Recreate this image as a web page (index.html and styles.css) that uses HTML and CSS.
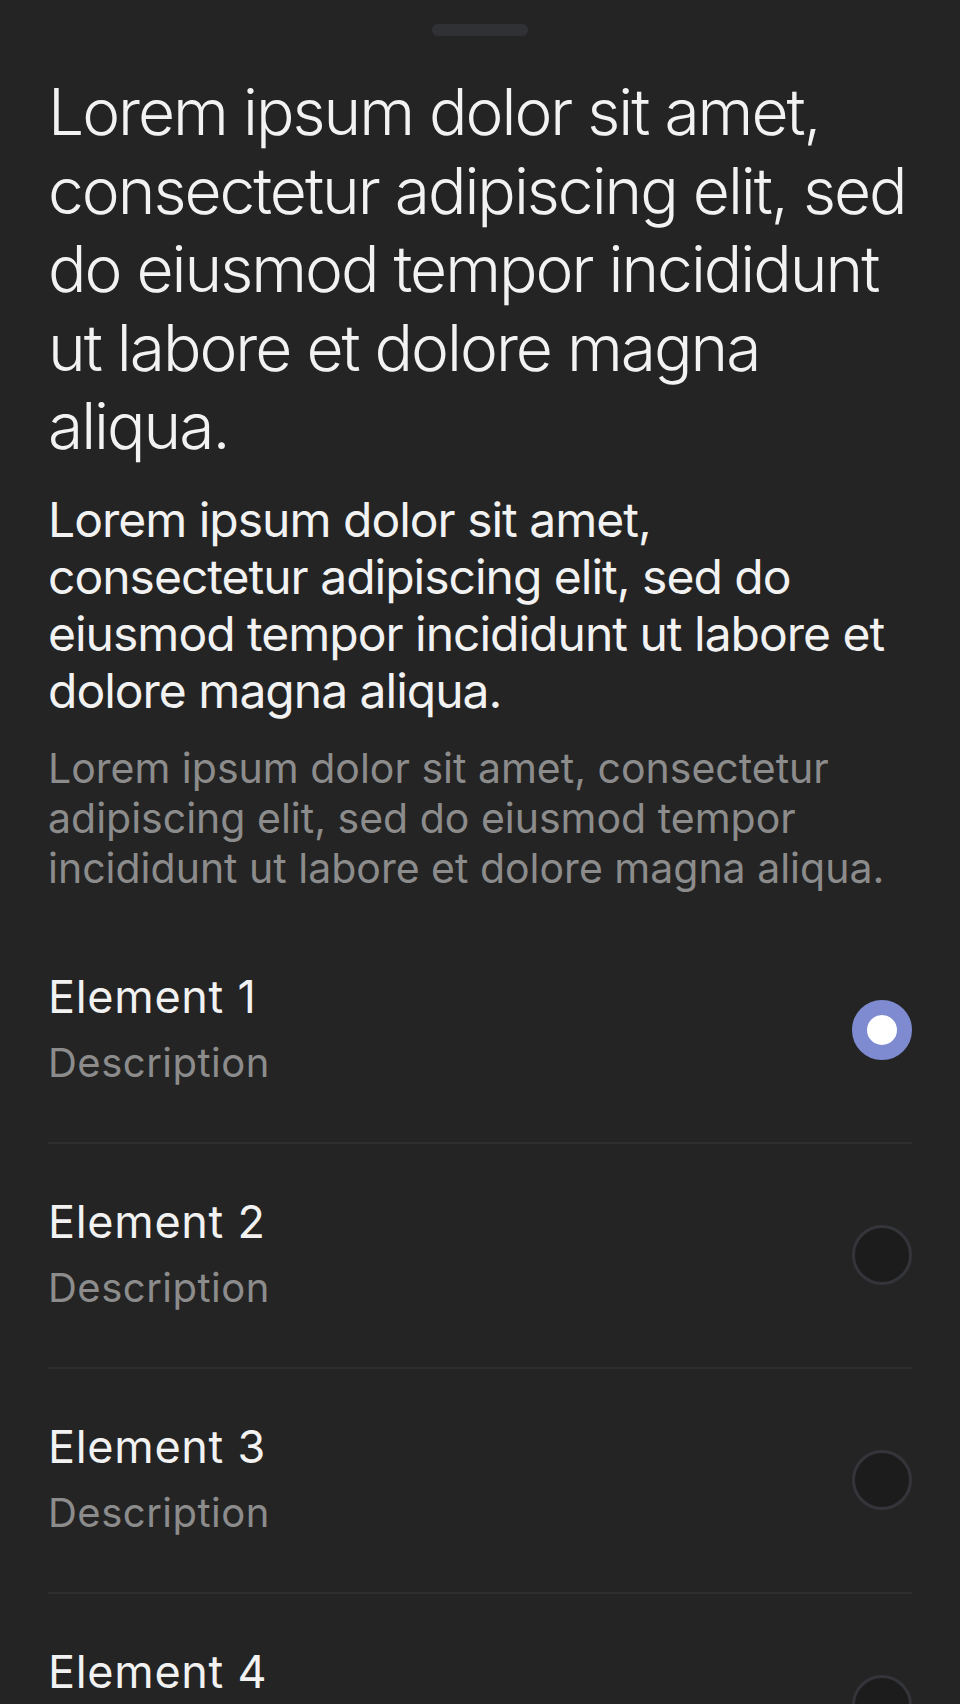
FILE: index.html
```html
<!DOCTYPE html>
<html lang="en">
<head>
<meta charset="utf-8">
<title>Sheet</title>
<link rel="stylesheet" href="styles.css">
</head>
<body>
<div class="sheet">
  <div class="handle"></div>
  <h1 class="title">Lorem ipsum dolor sit amet, consectetur adipiscing elit, sed do eiusmod tempor incididunt ut labore et dolore magna aliqua.</h1>
  <p class="body">Lorem ipsum dolor sit amet, consectetur adipiscing elit, sed do eiusmod tempor incididunt ut labore et dolore magna aliqua.</p>
  <p class="caption">Lorem ipsum dolor sit amet, consectetur adipiscing elit, sed do eiusmod tempor incididunt ut labore et dolore magna aliqua.</p>
  <ul class="list">
    <li class="row">
      <div class="text"><div class="name">Element 1</div><div class="desc">Description</div></div>
      <span class="radio checked"></span>
    </li>
    <li class="row">
      <div class="text"><div class="name">Element 2</div><div class="desc">Description</div></div>
      <span class="radio"></span>
    </li>
    <li class="row">
      <div class="text"><div class="name">Element 3</div><div class="desc">Description</div></div>
      <span class="radio"></span>
    </li>
    <li class="row">
      <div class="text"><div class="name">Element 4</div><div class="desc">Description</div></div>
      <span class="radio"></span>
    </li>
  </ul>
</div>
</body>
</html>
```
FILE: styles.css
```css
html, body {
  margin: 0;
  padding: 0;
  background: #242424;
}
body {
  font-family: Inter, "Noto Sans", sans-serif;
  color: #f2f2f2;
  overflow: hidden;
}
.sheet {
  padding: 0 48px;
  display: flex;
  flex-direction: column;
}
.handle {
  align-self: center;
  width: 96px;
  height: 12px;
  margin-top: 24px;
  border-radius: 6px;
  background: #303135;
}
.title {
  margin: 37px 0 0;
  font-size: 64px;
  font-weight: 300;
  line-height: 78.5px;
  letter-spacing: -2px;
}
.body {
  margin: 25px 0 0;
  font-size: 48px;
  font-weight: 400;
  line-height: 57px;
  letter-spacing: -1px;
}
.caption {
  margin: 24px 0 0;
  font-size: 41px;
  line-height: 50px;
  color: #8c8c8c;
}
.list {
  list-style: none;
  margin: 26px 0 0;
  padding: 0;
}
.row {
  display: flex;
  align-items: center;
  justify-content: space-between;
  height: 223px;
  border-bottom: 2px solid #2e2e2e;
}
.text {
  display: flex;
  flex-direction: column;
  margin-top: -4px;
}
.name {
  font-size: 45px;
  line-height: 56px;
  letter-spacing: 0.7px;
}
.desc {
  margin-top: 13px;
  font-size: 40px;
  line-height: 50px;
  letter-spacing: 0.5px;
  color: #8c8c8c;
}
.radio {
  box-sizing: border-box;
  width: 60px;
  height: 60px;
  border-radius: 50%;
  background: #1c1c1c;
  border: 3px solid #34353a;
  flex: none;
}
.radio.checked {
  background: #ffffff;
  border: 15px solid #7f8bd1;
}
```
